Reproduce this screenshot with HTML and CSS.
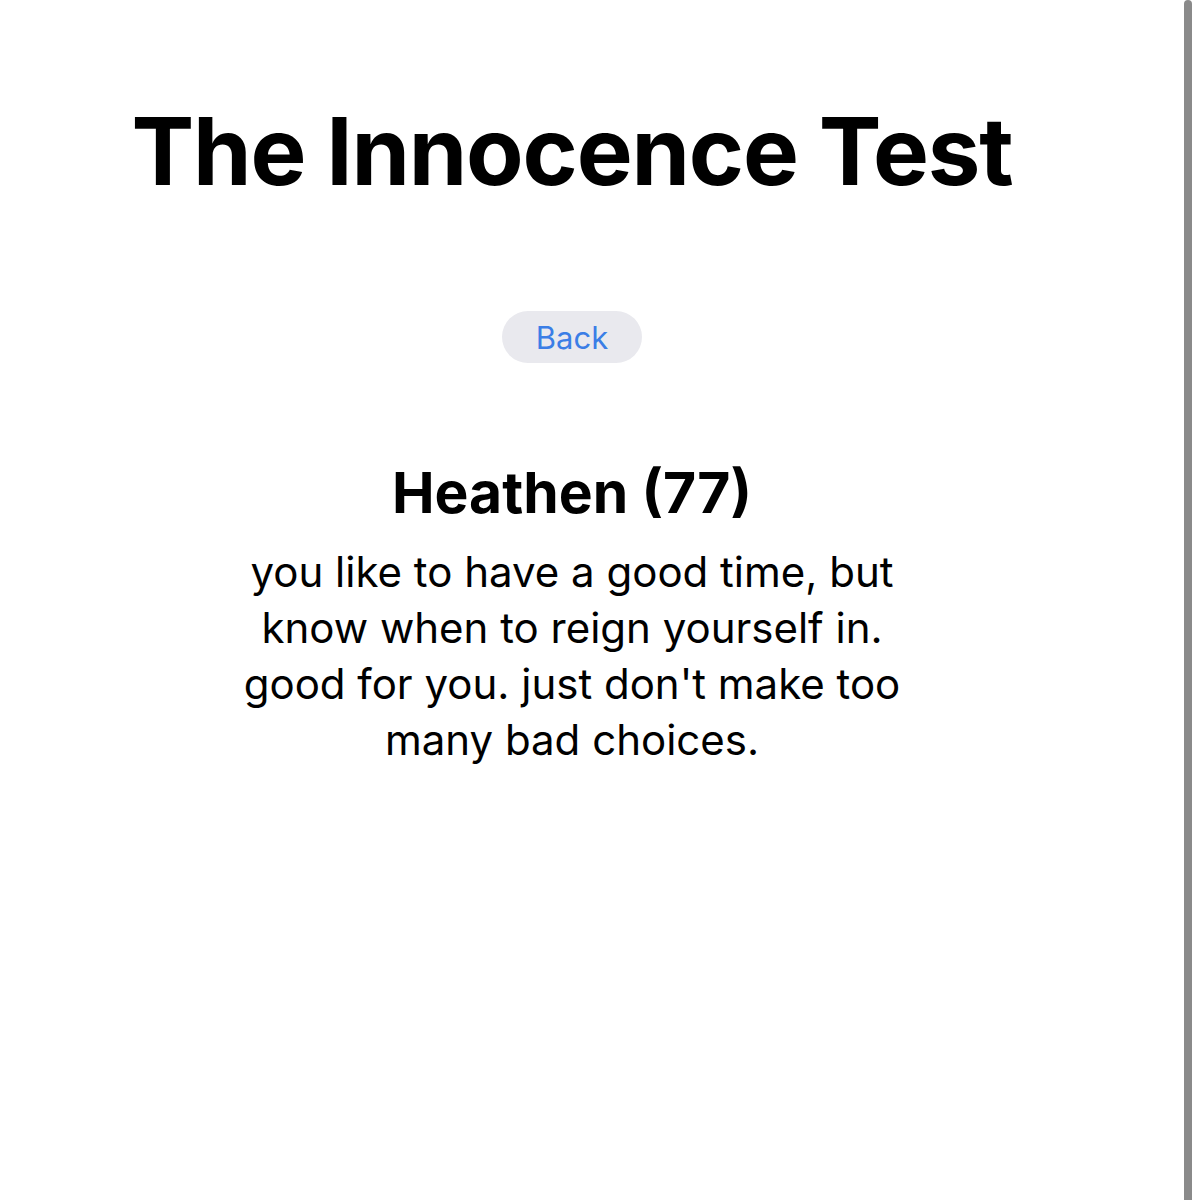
FILE: index.html
```html
<!DOCTYPE html>
<html lang="en">
<head>
    <meta charset="UTF-8">
    <meta name="viewport" content="width=device-width, initial-scale=1.0">
    <title>The Innocence Test</title>
    <link rel="stylesheet" href="styles.css">
</head>
<body>
    <div class="page">
        <h1 class="title">The Innocence Test</h1>

        <div class="actions">
            <button class="back">Back</button>
        </div>

        <div class="result">
            <h2 class="result-name">Heathen (77)</h2>
            <p class="result-text">you like to have a good time, but know when to reign yourself in. good for you. just don't make too many bad choices.</p>
        </div>
    </div>
    <div class="scrollbar"></div>
</body>
</html>
```

FILE: styles.css
```css
html, body {
    margin: 0;
    padding: 0;
    background: #fff;
}
body {
    font-family: Inter, "Noto Sans", sans-serif;
    color: #000;
    display: flex;
    height: 1200px;
    overflow: hidden;
}
.page {
    width: 1144px;
    flex: 0 0 1144px;
    text-align: center;
}
.title {
    font-size: 94px;
    font-weight: 700;
    letter-spacing: -1.2px;
    line-height: 1;
    margin: 0;
    padding-top: 104px;
}
.actions {
    padding-top: 113px;
    height: 52px;
}
.back {
    font-family: inherit;
    font-size: 31px;
    color: #3b7ee6;
    background: #e9e9ee;
    border: none;
    border-radius: 26px;
    width: 140px;
    height: 52px;
    padding: 0;
    vertical-align: top;
}
.result {
    padding-top: 101px;
}
.result-name {
    font-size: 57px;
    font-weight: 700;
    line-height: 1;
    margin: 0 0 23px;
}
.result-text {
    font-size: 42px;
    line-height: 56px;
    width: 680px;
    margin: 0 auto;
}
.scrollbar {
    width: 8px;
    height: 1200px;
    margin-left: 40px;
    background: #8a8a8a;
    border-radius: 4px 4px 0 0;
}
```
